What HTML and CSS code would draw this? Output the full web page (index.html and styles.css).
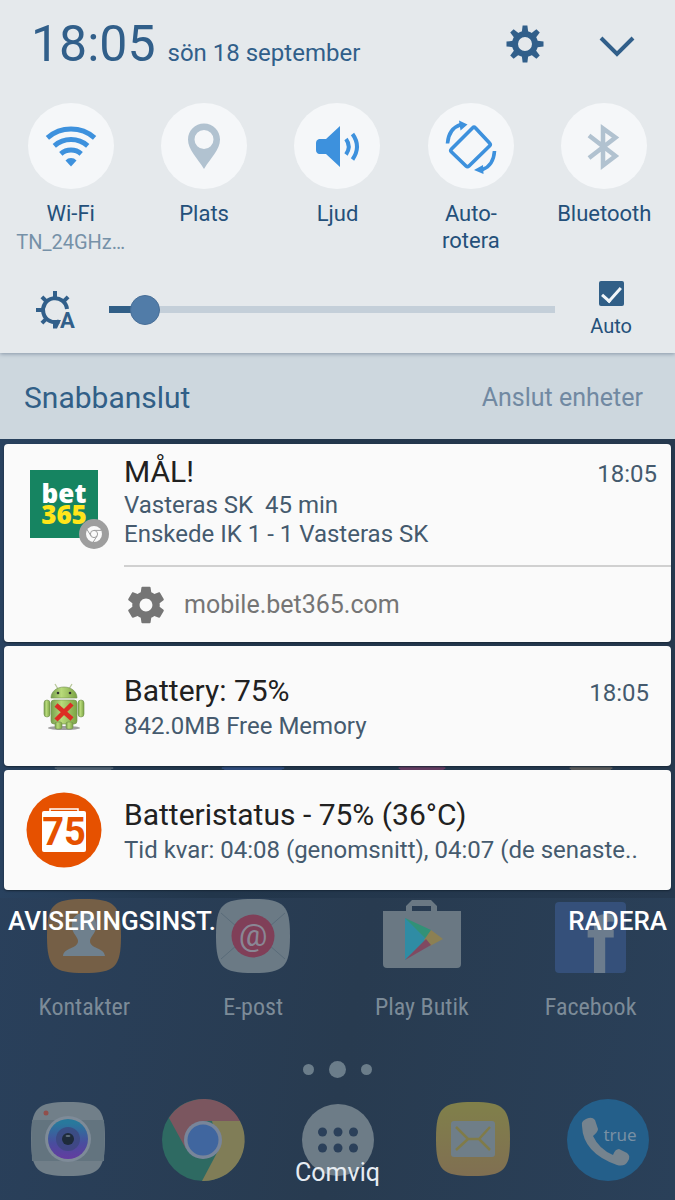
FILE: index.html
```html
<!DOCTYPE html>
<html lang="sv">
<head>
<meta charset="utf-8">
<meta name="viewport" content="width=device-width, initial-scale=1">
<title>Aviseringar</title>
<link rel="stylesheet" href="styles.css">
</head>
<body>
<div class="screen">
  <section class="quick-panel">
    <header class="status">
      <time class="clock">18:05</time>
      <span class="date">sön 18 september</span>
      <button class="icon-button" aria-label="Inställningar">
        <svg width="38" height="38" viewBox="-19 -19 38 38" fill="#315f8a">
          <path fill-rule="evenodd" d="M0-13a13 13 0 1 0 0 26a13 13 0 1 0 0-26zM0-7a7 7 0 1 1 0 14a7 7 0 1 1 0-14z"/>
          <g id="teeth"><path id="tooth" d="M-2.4-18.5h4.8l1 8h-6.8z"/><use href="#tooth" transform="rotate(45)"/><use href="#tooth" transform="rotate(90)"/><use href="#tooth" transform="rotate(135)"/><use href="#tooth" transform="rotate(180)"/><use href="#tooth" transform="rotate(225)"/><use href="#tooth" transform="rotate(270)"/><use href="#tooth" transform="rotate(315)"/></g>
        </svg>
      </button>
      <button class="icon-button" aria-label="Visa mer">
        <svg width="38" height="24" viewBox="0 0 38 24" fill="none" stroke="#315f8a" stroke-width="4"><path d="M3 4l16 16L35 4"/></svg>
      </button>
    </header>

    <div class="tiles">
      <button class="tile">
        <span class="tile-icon"><svg viewBox="0 0 86 86" fill="none" stroke="#3d91dd" stroke-width="5">
          <path d="M19.4 34.8a36 36 0 0 1 47.2 0M26.3 42.8a25.5 25.5 0 0 1 33.4 0M32.8 50.8a15.5 15.5 0 0 1 20.4 0"/>
          <path stroke="none" fill="#3d91dd" d="M43 63.500l-5.500-6a7.500 7.500 0 0 1 11 0z"/></svg></span>
        <span class="tile-label">Wi-Fi</span>
        <span class="tile-detail">TN_24GHz…</span>
      </button>
      <button class="tile">
        <span class="tile-icon"><svg viewBox="0 0 86 86" fill="#b1c2d0"><path fill-rule="evenodd" d="M43 20.500c-9 0-16 7-16 16 0 10 9 18 16 29.500 7-11.500 16-19.500 16-29.500 0-9-7-16-16-16zm0 6.500a9.500 9.500 0 1 1 0 19a9.500 9.500 0 0 1 0-19z"/></svg></span>
        <span class="tile-label">Plats</span>
      </button>
      <button class="tile">
        <span class="tile-icon"><svg viewBox="0 0 86 86" fill="#3d91dd"><path d="M25 36h7l14-13v41L32 51h-7q-3-1-3-4v-7q0-3 3-4z"/><path fill="none" stroke="#3d91dd" stroke-width="4" d="M52 36q5.500 7.500 0 15.500M58.500 31q9 12.500 0 25.500"/></svg></span>
        <span class="tile-label">Ljud</span>
      </button>
      <button class="tile">
        <span class="tile-icon"><svg viewBox="0 0 86 86" fill="none" stroke="#3d91dd" stroke-width="3.600"><path stroke-linejoin="round" d="M44.500 25q1.500-1.500 3 0L61.500 40q1.500 1.500 0 3L41 63q-1.500 1.500-3 0L23.500 49q-1.500-1.500 0-3zM19.500 40.500q1-15 13.500-19M66.500 48q-1 14.500-12 18.500"/><path stroke="none" fill="#3d91dd" d="M31 17.500l8.500 4-7 6zM46 67l9-5 .5 9z"/></svg></span>
        <span class="tile-label">Auto-<br>rotera</span>
      </button>
      <button class="tile">
        <span class="tile-icon"><svg viewBox="0 0 86 86" fill="none" stroke="#b1c2d0" stroke-width="4.500"><path d="M28 32.500L54.500 53 42 62.500V25.500l12.500 9L28 55"/></svg></span>
        <span class="tile-label">Bluetooth</span>
      </button>
    </div>

    <div class="brightness">
      <svg class="brightness-icon" width="42" height="40" viewBox="-20 -20 42 40" fill="#315f8a">
        <path fill="none" stroke="#315f8a" stroke-width="4" d="M12-1A12 12 0 1 0 4 11.500"/>
        <path d="M-2-19h4v7h-4zM-19-2h7v4h-7zM-2 10H6L2 18.500h-4z"/>
        <path id="ray" transform="rotate(45)" d="M-2-18.500h4v6h-4z"/><use href="#ray" transform="rotate(-90)"/><use href="#ray" transform="rotate(180)"/>
        <text class="auto-mark" x="5" y="18">A</text>
      </svg>
      <input class="slider" type="range" min="0" max="100" value="5" aria-label="Ljusstyrka">
      <label class="auto"><input class="auto-box" type="checkbox" checked>Auto</label>
    </div>
  </section>

  <nav class="connect">
    <button class="connect-main">Snabbanslut</button>
    <button class="connect-devices">Anslut enheter</button>
  </nav>

  <main class="notifications">
    <article class="card card-web">
      <div class="card-icon">
        <svg width="80" height="84" viewBox="0 0 80 84">
          <path fill="#168461" d="M1 1h68v68H1z"/>
          <text class="bet-text" x="35" y="34" fill="#fff">bet</text>
          <text class="bet-text" x="35" y="55" fill="#ffe51a">365</text>
          <circle cx="65" cy="65" r="15" fill="#9e9e9e"/><circle cx="65" cy="65" r="8" fill="#fafafa"/>
          <g fill="none" stroke="#9e9e9e"><circle cx="65" cy="65" r="3.600"/><path d="M65 61.400h7.500M61.900 66.800l-4-6.500M68.100 66.800l-4 6.500"/></g>
        </svg>
      </div>
      <div class="card-body">
        <div class="card-head"><h2>MÅL!</h2><time>18:05</time></div>
        <p>Vasteras SK&nbsp; 45 min</p>
        <p>Enskede IK 1 - 1 Vasteras SK</p>
        <button class="site">
          <svg width="44" height="44" viewBox="0 0 24 24" fill="#757575"><path d="M19.430 12.980c.04-.32.07-.64.07-.98s-.03-.66-.07-.98l2.110-1.650c.19-.15.24-.42.12-.64l-2-3.460c-.12-.22-.39-.3-.61-.22l-2.490 1c-.52-.4-1.080-.73-1.690-.98l-.38-2.650C14.460 2.180 14.250 2 14 2h-4c-.25 0-.46.18-.49.42l-.38 2.650c-.61.25-1.170.59-1.690.98l-2.490-1c-.23-.09-.49 0-.61.22l-2 3.460c-.13.22-.07.49.12.64l2.110 1.650c-.04.32-.07.65-.07.98s.03.66.07.98l-2.110 1.650c-.19.15-.24.42-.12.64l2 3.460c.12.22.39.3.61.22l2.490-1c.52.4 1.080.73 1.690.98l.38 2.650c.03.24.24.42.49.42h4c.25 0 .46-.18.49-.42l.38-2.650c.61-.25 1.170-.59 1.690-.98l2.490 1c.23.09.49 0 .61-.22l2-3.460c.12-.22.07-.49-.12-.64l-2.110-1.650zM12 15.500c-1.930 0-3.500-1.570-3.500-3.500s1.570-3.500 3.500-3.500 3.500 1.570 3.500 3.500-1.570 3.500-3.500 3.500z"/></svg>
          mobile.bet365.com
        </button>
      </div>
    </article>

    <article class="card">
      <div class="card-icon">
        <svg width="76" height="76" viewBox="0 0 76 76">
          <defs><linearGradient id="droid"><stop offset="0" stop-color="#78a14d"/><stop offset=".4" stop-color="#b8da7a"/><stop offset="1" stop-color="#7ba343"/></linearGradient></defs>
          <ellipse cx="38" cy="60" rx="16" ry="2" fill="#777" opacity=".7"/>
          <path stroke="#b9c99b" stroke-width="1.300" d="M32 21l-3-5M43 21l3-5"/>
          <g fill="url(#droid)" stroke="#718d4d" stroke-width=".6">
            <path d="M25 30c0-6 5-11 13-11s13 5 13 11z"/><rect x="25" y="32" width="26" height="24" rx="3"/>
            <rect x="18" y="32" width="6" height="17" rx="3"/><rect x="52" y="32" width="6" height="17" rx="3"/>
            <rect x="29" y="54" width="7" height="7" rx="2"/><rect x="40" y="54" width="7" height="7" rx="2"/>
          </g>
          <circle cx="32" cy="25" r="1.300" fill="#333"/><circle cx="44" cy="25" r="1.300" fill="#333"/>
          <path stroke="#dc2d24" stroke-width="4.500" d="M30 37l16 14M46 36L30 52"/>
        </svg>
      </div>
      <div class="card-body">
        <div class="card-head card-head-inset"><h2>Battery: 75%</h2><time>18:05</time></div>
        <p>842.0MB Free Memory</p>
      </div>
    </article>

    <article class="card">
      <div class="card-icon">
        <svg width="76" height="76" viewBox="0 0 76 76">
          <circle cx="38" cy="38" r="37.500" fill="#e65100"/>
          <path fill="none" stroke="#fff" stroke-width="1.500" d="M24 20v-3h28v3"/>
          <rect x="16" y="19" width="44" height="41" rx="2" fill="#fff"/>
          <text class="level" x="38" y="53">75</text>
        </svg>
      </div>
      <div class="card-body">
        <div class="card-head"><h2>Batteristatus - 75% (36°C)</h2></div>
        <p>Tid kvar: 04:08 (genomsnitt), 04:07 (de senaste..</p>
      </div>
    </article>
  </main>

  <section class="home">
    <div class="actions"><button>AVISERINGSINST.</button><button>RADERA</button></div>
    <div class="apps">
      <a class="app" href="#kontakter">
        <svg width="80" height="76" viewBox="-3 -1 80 76"><path fill="#755f46" d="M37 0C68 0 74 6 74 37S68 74 37 74 0 68 0 37 6 0 37 0z"/><path fill="#6f808d" d="M37 14c10 0 13 7 12 15-1 6-6 9-6 13 0 8 14 6 15 15H16c1-9 15-7 15-15 0-4-5-7-6-13-1-8 2-15 12-15z"/></svg>
        <span>Kontakter</span>
      </a>
      <a class="app" href="#epost">
        <svg width="80" height="76" viewBox="-3 -1 80 76"><path fill="#6b7a85" d="M37 0C68 0 74 6 74 37S68 74 37 74 0 68 0 37 6 0 37 0z"/><path stroke="#596b79" fill="none" d="M5 14l16 14M69 14L53 28M5 60l16-14M69 60L53 46"/><circle cx="37" cy="37" r="21.500" fill="#803f58"/><text class="at" x="37" y="47">@</text></svg>
        <span>E-post</span>
      </a>
      <a class="app" href="#play">
        <svg width="80" height="76" viewBox="0 0 80 76"><path fill="#6a7883" fill-rule="evenodd" d="M1 13h23V8l6-6h19l6 6v5h24v53q0 4-4 4H5q-4 0-4-4zM30 8v5h19V8z"/><path fill="#2f8ca4" d="M23 20v42l25-24z"/><path fill="#329177" d="M23 20l26 12-5 9z"/><path fill="#8c8053" d="M49 32l12 9-13 7-6-6z"/><path fill="#804961" d="M23 62l21-21 5 6z"/></svg>
        <span>Play Butik</span>
      </a>
      <a class="app" href="#facebook">
        <svg width="80" height="76" viewBox="0 0 80 76"><rect x="4" y="4" width="71" height="71" rx="4" fill="#35507a"/><text class="fb" x="49" y="75">f</text></svg>
        <span>Facebook</span>
      </a>
    </div>
    <div class="dots"><i></i><i class="current"></i><i></i></div>
    <div class="dock">
      <a href="#kamera" aria-label="Kamera"><svg width="84" height="84" viewBox="-42 -42 84 84">
        <defs><linearGradient id="lens" x2="0" y2="1"><stop offset=".1" stop-color="#28799c"/><stop offset=".6" stop-color="#494d9e"/><stop offset="1" stop-color="#643ca0"/></linearGradient></defs>
        <path fill="#717f89" d="M0-38C31-38 37-32 37-1S31 36 0 36-37 30-37-1-31-38 0-38z"/><path fill="#63747f" d="M-36-20h72q1 20 0 41h-72q-1-20 0-41z"/><circle cx="-22" cy="-27" r="2.500" fill="#914f4c"/><circle r="23" cy="-1" fill="#7e8b98"/><circle r="20" cy="-1" fill="url(#lens)"/><circle r="12" cy="-1" fill="#3c477e" opacity=".8"/><circle r="6" cy="-1" fill="#1e2b3b"/><ellipse cy="-4" rx="2.500" ry="1" fill="#62717e"/></svg></a>
      <a href="#chrome" aria-label="Chrome"><svg width="84" height="84" viewBox="-42 -42 84 84">
        <circle r="41" fill="#2e6a62"/><path fill="#7b565f" d="M-34-22A41 41 0 0 1 37-19H0L-17 9z"/><path fill="#807d57" d="M37-19A41 41 0 0 1-1 41L16 9 9-19z"/><circle r="19" fill="#78859a"/><circle r="15.500" fill="#40669f"/></svg></a>
      <a href="#appar" aria-label="Appar"><svg width="84" height="84" viewBox="-42 -42 84 84"><circle r="36" fill="#6d7c87"/><g fill="#2b405a"><circle cx="-15.500" cy="-8" r="4.500"/><circle cy="-8" r="4.500"/><circle cx="15.500" cy="-8" r="4.500"/><circle cx="-15.500" cy="8" r="4.500"/><circle cy="8" r="4.500"/><circle cx="15.500" cy="8" r="4.500"/></g></svg></a>
      <a href="#meddelanden" aria-label="Meddelanden"><svg width="84" height="84" viewBox="-42 -42 84 84">
        <defs><linearGradient id="mail" x2="0" y2="1"><stop stop-color="#80804a"/><stop offset="1" stop-color="#806f52"/></linearGradient></defs>
        <path fill="url(#mail)" d="M0-38C31-38 37-32 37-1S31 36 0 36-37 30-37-1-31-38 0-38z"/><rect x="-22" y="-19" width="44" height="36" rx="3" fill="#6f7e88"/><path fill="none" stroke="#807b48" stroke-width="2.500" d="M-17-13L-5-1H6L17-13M-17 10L-5-1M17 10L6-1"/></svg></a>
      <a href="#truecaller" aria-label="Truecaller"><svg width="84" height="84" viewBox="-42 -42 84 84"><circle r="41" fill="#245f8a"/><path fill="#75838e" d="M-25-19Q-17-25-13-20L-10-11Q-10-8-15-4Q-9 9 5 15Q7 9 11 9L19 13Q23 16 20 21Q17 27 9 25Q-25 13-26-14Q-27-17-25-19z"/><text class="true" x="12" y="1">true</text></svg></a>
    </div>
    <p class="carrier">Comviq</p>
  </section>
</div>
</body>
</html>
```
FILE: styles.css
```css
* { box-sizing: border-box; }

body {
  margin: 0;
  background: #2b405a;
  font-family: Roboto, "Liberation Sans", sans-serif;
}

h2, p { margin: 0; font-weight: 400; }

button {
  border: 0;
  padding: 0;
  background: none;
  font: inherit;
  color: inherit;
  cursor: pointer;
}

a { color: inherit; text-decoration: none; }
svg { display: block; overflow: visible; }

.screen {
  min-height: 100vh;
  background: linear-gradient(100deg, #2a4260, #283b50 60%, #2a4059);
}

/* Quick settings */
.quick-panel {
  position: relative;
  background: #e5e9ec;
  color: #24507a;
  box-shadow: 0 1px 4px #8897a8;
}

.status {
  display: flex;
  align-items: baseline;
  padding: 14px 39px 0 31px;
  height: 88px;
  color: #315f8a;
}

.clock { font-size: 50px; line-height: 60px; }
.date { flex: 1; margin-left: 12px; font-size: 24px; }
.icon-button { align-self: flex-start; display: grid; place-items: center; height: 60px; }
.icon-button + .icon-button { margin-left: 54px; height: 64px; }

.tiles {
  display: grid;
  grid-template-columns: repeat(5, 1fr);
  padding: 15px 4px 0;
}

.tile {
  display: flex;
  flex-direction: column;
  align-items: center;
  font-size: 22px;
  line-height: 27px;
}

.tile-icon {
  width: 86px;
  height: 86px;
  margin-bottom: 11px;
  border-radius: 50%;
  background: #f5f7f9;
}

.tile-detail { margin-top: 2px; font-size: 20px; color: #7691a8; }

.brightness {
  display: flex;
  align-items: center;
  padding: 25px 43px 15px 35px;
}

.brightness-icon { flex: none; }
.auto-mark { font: 700 22px Roboto, sans-serif; }

.slider {
  appearance: none;
  flex: 1;
  min-width: 0;
  height: 30px;
  margin: 0 35px 0 32px;
  background: linear-gradient(90deg, #315f87 36px, #c4cfd9 36px) center / 100% 7px no-repeat;
}

.slider::-webkit-slider-thumb {
  appearance: none;
  width: 30px;
  height: 30px;
  border: 1px solid #486f98;
  border-radius: 50%;
  background: #517ca8;
}

.auto {
  display: flex;
  flex-direction: column;
  align-items: center;
  gap: 8px;
  font-size: 20px;
  line-height: 24px;
}

.auto-box {
  appearance: none;
  display: grid;
  justify-items: center;
  width: 25px;
  height: 25px;
  margin: 0;
  border-radius: 2px;
  background: #315f87;
}

.auto-box::after {
  content: "";
  width: 8px;
  height: 16px;
  margin-top: 2px;
  border: solid #f2f6f9;
  border-width: 0 3px 3px 0;
  rotate: 42deg;
}

/* Quick connect */
.connect {
  display: flex;
  align-items: center;
  justify-content: space-between;
  height: 86px;
  padding: 3px 32px 0 24px;
  background: #cdd7de;
}

.connect-main { font-size: 30px; color: #315f87; }
.connect-devices { font-size: 25px; color: #7189a2; }

/* Notifications */
.notifications {
  display: grid;
  gap: 4px;
  padding: 5px 4px 8px;
  background:
    radial-gradient(ellipse 30px 4px at 84px 329px, #526373 96%, transparent),
    radial-gradient(ellipse 32px 4px at 253px 329px, #304c7d 96%, transparent),
    radial-gradient(ellipse 24px 4px at 422px 329px, #663b61 96%, transparent),
    radial-gradient(ellipse 22px 4px at 591px 329px, #5b5b5b 96%, transparent),
    linear-gradient(90deg, #29425f, #22364b 31%, #26394f);
}

.card {
  display: flex;
  min-height: 120px;
  border-radius: 4px;
  background: #fafafa;
  box-shadow: 0 1px 2px #172637;
}

.card-icon { flex: none; width: 120px; padding: 22px 0 0 22px; }
.card-body { flex: 1; min-width: 0; padding: 26px 0 0; }
.card-web .card-icon { padding: 25px 0 0 25px; }
.card-web .card-body { padding-top: 9px; }

.card-head {
  display: flex;
  justify-content: space-between;
  align-items: baseline;
  height: 38px;
  padding-right: 14px;
  line-height: 38px;
  color: #212121;
}

.card-head-inset { padding-right: 22px; }
.card-head h2 { font-size: 30px; }
.card-head time { font-size: 24px; color: #455a6e; }

.card p {
  overflow: hidden;
  font-size: 24px;
  line-height: 29px;
  color: #455a6e;
  white-space: nowrap;
}

.card:not(.card-web) p { margin-top: 2px; }

.site {
  display: flex;
  align-items: center;
  gap: 16px;
  width: 100%;
  height: 77px;
  margin-top: 16px;
  border-top: 2px solid #d0d0d0;
  font-size: 25px;
  color: #757575;
}

.bet-text { font: 800 26px "Open Sans", sans-serif; text-anchor: middle; }
.level { font: 700 38px Roboto, sans-serif; text-anchor: middle; fill: #e65100; }

/* Home screen */
.home { position: relative; color: #7c8b98; }

.actions {
  position: absolute;
  inset: 6px 8px auto;
  display: flex;
  justify-content: space-between;
  font-size: 26px;
  font-weight: 500;
  line-height: 34px;
  color: #fff;
  text-shadow: 0 1px 2px #2228;
}

.apps { display: grid; grid-template-columns: repeat(4, 1fr); }

.app {
  display: flex;
  flex-direction: column;
  align-items: center;
  gap: 18px;
  font-family: "Roboto Condensed", Roboto, sans-serif;
  font-size: 24px;
  line-height: 30px;
}

.at { font: 400 32px Roboto, sans-serif; text-anchor: middle; fill: #8a8795; }
.fb { font: 700 82px "Liberation Sans", sans-serif; text-anchor: middle; fill: #6c7c8d; }
.true { font: 400 17px "Noto Sans", sans-serif; text-anchor: middle; fill: #7890a4; }

.dots {
  display: flex;
  align-items: center;
  justify-content: center;
  gap: 15px;
  height: 18px;
  margin-top: 38px;
}

.dots i { width: 11px; height: 11px; border-radius: 50%; background: #6b7d8a; }
.dots .current { width: 17px; height: 17px; }

.dock {
  display: grid;
  grid-template-columns: repeat(5, 1fr);
  justify-items: center;
  margin-top: 20px;
}

.carrier {
  position: absolute;
  inset: auto 0 -6px;
  font-size: 25px;
  line-height: 30px;
  text-align: center;
  color: #e6ecf2;
}
```
